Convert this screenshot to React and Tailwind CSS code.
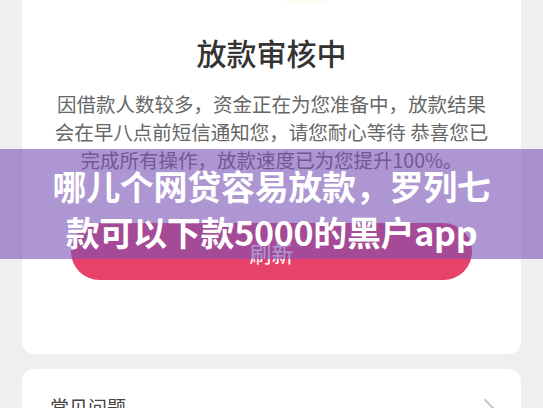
// App.jsx — loan review status screen with promo banner overlay

const CJK = { fontFamily: '"Noto Sans CJK SC", "Noto Sans", sans-serif' };

export default function App() {
  return (
    <div className="relative w-[543px] h-[408px] overflow-hidden bg-[#efefef] px-[22px]" style={CJK}>

      {/* Status card */}
      <div className="bg-white rounded-b-[12px] pb-[74px]">
        {/* bottom edge of the illustration above */}
        <div className="ml-[263px] w-[42px] h-[3px] rounded-b-full bg-[#fcfaf0]" />

        <h1 className="mt-[34px] text-center text-[30px] leading-[30px] font-medium text-[#333]">放款审核中</h1>

        <div className="mt-[23px] text-center text-[19.5px] leading-[28px] text-[#666]">
          <p>因借款人数较多，资金正在为您准备中，放款结果</p>
          <p>会在早八点前短信通知您，请您耐心等待 恭喜您已</p>
          <p>完成所有操作，放款速度已为您提升100%。</p>
        </div>

        <div className="mt-[49px] mx-[49px] h-[57px] rounded-full bg-[#e9426a] flex items-center justify-center">
          <span className="text-white text-[22px] leading-none">刷新</span>
        </div>
      </div>

      {/* FAQ card */}
      <div className="mt-[15px] bg-white rounded-[12px] h-[60px] pl-[28px] pr-[26px] pt-[27px] flex justify-between">
        <span className="text-[19px] leading-[22px] text-[#444]">常见问题</span>
        <svg width="12" height="20" viewBox="0 0 12 20" className="mt-[2px]">
          <path d="M2 2 L10 10 L2 18" fill="none" stroke="#c4c4c4" strokeWidth="2" strokeLinecap="round" strokeLinejoin="round" />
        </svg>
      </div>

      {/* Banner overlay */}
      <div className="absolute left-0 right-0 top-[149px] h-[110px] bg-[rgba(120,80,180,0.6)] pt-[14px]">
        <p className="text-center text-white font-bold text-[34px] leading-[46px] tracking-[-0.3px]">哪儿个网贷容易放款，罗列七</p>
        <p className="text-center text-white font-bold text-[34px] leading-[46px] tracking-[-0.3px]">款可以下款5000的黑户app</p>
      </div>
    </div>
  );
}
